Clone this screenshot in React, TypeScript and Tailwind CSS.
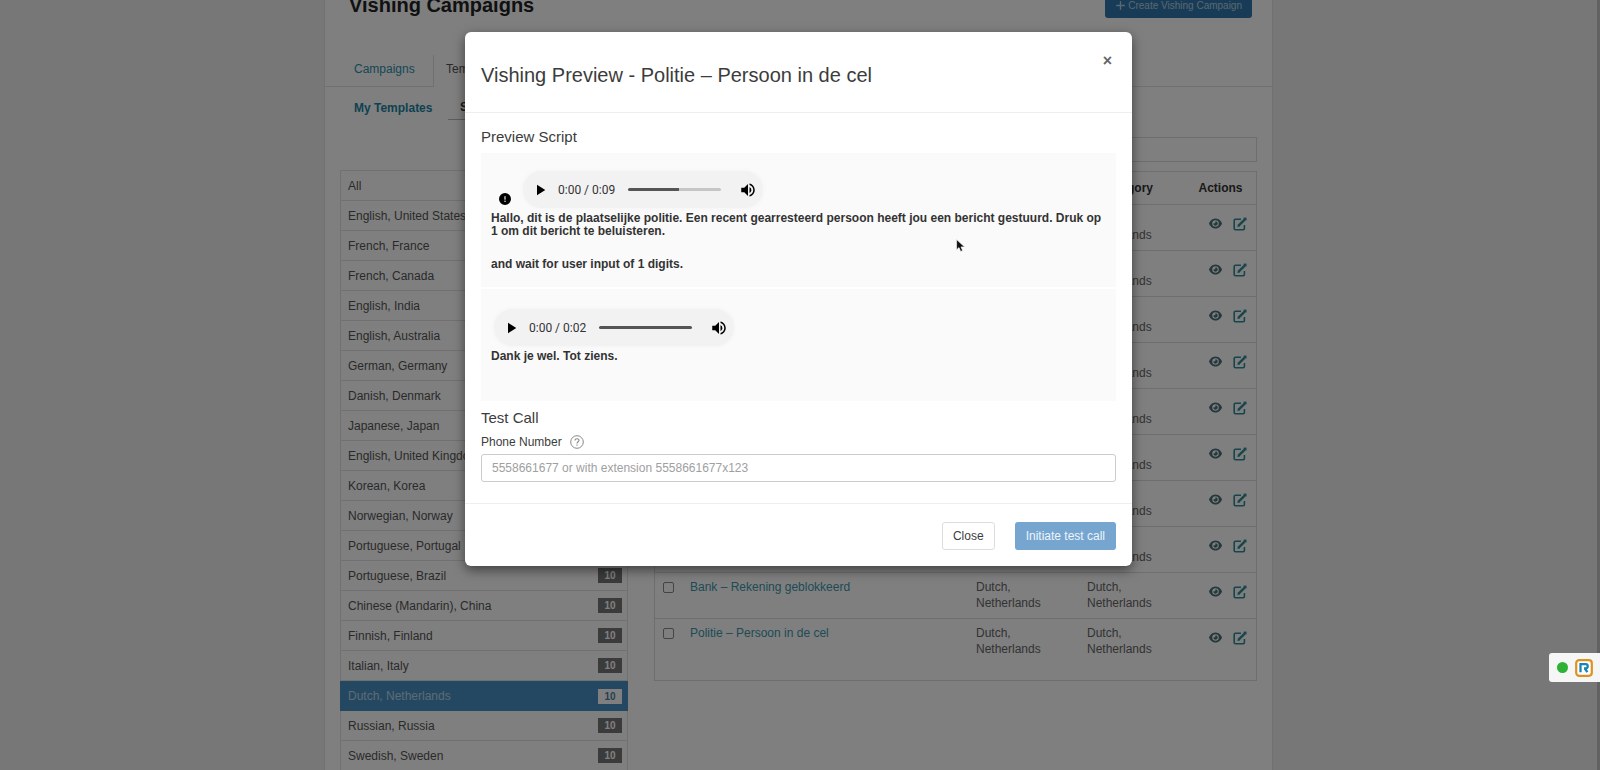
import React from "react";
import { FaCircleExclamation, FaEye, FaPlus } from "react-icons/fa6";
import { MdPlayArrow, MdVolumeUp } from "react-icons/md";

const languages = [
  "All",
  "English, United States",
  "French, France",
  "French, Canada",
  "English, India",
  "English, Australia",
  "German, Germany",
  "Danish, Denmark",
  "Japanese, Japan",
  "English, United Kingdom",
  "Korean, Korea",
  "Norwegian, Norway",
  "Portuguese, Portugal",
  "Portuguese, Brazil",
  "Chinese (Mandarin), China",
  "Finnish, Finland",
  "Italian, Italy",
  "Dutch, Netherlands",
  "Russian, Russia",
  "Swedish, Sweden",
];

const templates = [
  "Bank – Verdachte transactie",
  "Bank – Pincode",
  "Belastingdienst – Teruggave",
  "CEO – Dringend verzoek",
  "Helpdesk – Wachtwoord",
  "HR – Salarisgegevens",
  "IT – Beveiligingsupdate",
  "Pakket – Bezorging",
  "Bank – Rekening geblokkeerd",
  "Politie – Persoon in de cel",
];

function EditIcon() {
  return (
    <svg viewBox="0 0 14 14" className="size-3.5" fill="none" stroke="currentColor">
      <path d="M8 2.2H2.4Q1.2 2.2 1.2 3.4v8.2q0 1.2 1.2 1.2h7.8q1.2 0 1.2-1.2V8" strokeWidth="1.6" />
      <path d="M5.6 8.6L11.4 2.8" strokeWidth="2.4" />
      <path d="M4.4 9.9l.5-2.6 2.1 2.1z" fill="currentColor" stroke="none" />
      <path d="M10.6.6h2.9v2.9h-2.9z" fill="currentColor" stroke="none" />
    </svg>
  );
}

function LanguageList() {
  return (
    <ul className="border-x border-t border-[#e2e2e2] text-xs">
      {languages.map((name) => {
        const active = name === "Dutch, Netherlands";
        return (
          <li key={name}>
            <a
              href="#"
              className={
                active
                  ? "-mx-px flex h-[30px] items-center justify-between bg-[#4a90c4] pr-1.5 pl-2 text-[#bdd6e6]"
                  : "flex h-[30px] items-center justify-between border-b border-[#e2e2e2] pr-[5px] pl-[7px] text-[#555555]"
              }
            >
              {name}
              {name !== "All" && (
                <span
                  className={
                    active
                      ? "w-6 bg-white text-center text-[10px] leading-[15px] font-bold text-[#4a82a8]"
                      : "w-6 bg-[#777777] text-center text-[10px] leading-[15px] font-bold text-white"
                  }
                >
                  10
                </span>
              )}
            </a>
          </li>
        );
      })}
    </ul>
  );
}

function TemplateTable() {
  return (
    <div className="mt-[9px] border border-[#dddddd] pb-4">
      <table className="w-full table-fixed text-xs leading-4 text-[#666666]">
        <thead>
          <tr className="h-8 text-center text-[#333333]">
            <th className="w-[35px]"></th>
            <th>Name</th>
            <th className="w-[111px]">Language</th>
            <th className="w-[98px] pr-[18px]">Category</th>
            <th className="w-[71px]">Actions</th>
          </tr>
        </thead>
        <tbody>
          {templates.map((name) => (
            <tr key={name} className="h-[46px] border-t border-[#dddddd] align-top">
              <td className="pt-[9px] pl-2">
                <input
                  type="checkbox"
                  aria-label={name}
                  className="block size-[11px] appearance-none rounded-[2px] border border-[#888888] bg-white"
                />
              </td>
              <td className="pt-1.5">
                <a href="#" className="text-[#3c96aa]">{name}</a>
              </td>
              <td className="pt-1.5 pr-8">Dutch, Netherlands</td>
              <td className="pt-1.5 pr-6">Dutch, Netherlands</td>
              <td className="pt-3">
                <div className="flex items-center justify-end gap-[11px] pr-[9px]">
                  <button type="button" aria-label="Preview" className="text-[#4a7078]">
                    <FaEye className="size-[13px]" />
                  </button>
                  <button type="button" aria-label="Edit" className="text-[#2f8a96]">
                    <EditIcon />
                  </button>
                </div>
              </td>
            </tr>
          ))}
        </tbody>
      </table>
    </div>
  );
}

function AudioPlayer({ duration, buffered }: { duration: string; buffered: "half" | "full" }) {
  return (
    <div className="flex h-[37px] w-[240px] items-center rounded-full bg-[#f2f2f3] pl-2 shadow-[0_0_4px_#f2f2f3]">
      <button type="button" aria-label="Play" className="mr-[9px] text-black">
        <MdPlayArrow className="size-[18px]" />
      </button>
      <span className="w-[70px] font-[Roboto,sans-serif] text-xs font-normal text-[#333333]">0:00 / {duration}</span>
      <input
        type="range"
        aria-label="Seek"
        defaultValue={0}
        className={
          buffered === "half"
            ? "h-[3px] w-[93px] appearance-none rounded-full bg-linear-to-r from-[#555555] from-55% to-[#c6c6c6] to-55% [&::-webkit-slider-thumb]:size-0 [&::-webkit-slider-thumb]:appearance-none"
            : "h-[3px] w-[93px] appearance-none rounded-full bg-[#555555] [&::-webkit-slider-thumb]:size-0 [&::-webkit-slider-thumb]:appearance-none"
        }
      />
      <button type="button" aria-label="Mute" className="ml-[18px] text-black">
        <MdVolumeUp className="size-[18px]" />
      </button>
    </div>
  );
}

function PreviewDialog() {
  return (
    <div
      role="dialog"
      aria-label="Vishing Preview"
      className="w-full max-w-[667px] rounded-md bg-white text-[#3c3c3c] shadow-[0_4px_12px_rgba(0,0,0,0.5)]"
    >
      <header className="flex h-[81px] items-center justify-between border-b border-[#eeeeee] px-4 pt-1.5">
        <h2 className="text-xl">Vishing Preview - Politie – Persoon in de cel</h2>
        <button type="button" aria-label="Close" className="mr-1 mb-7 text-base leading-4 font-bold text-[#666666]">
          ×
        </button>
      </header>
      <div className="px-4 pt-3.5 pb-[21px]">
        <h3 className="text-[15px] leading-5">Preview Script</h3>
        <div className="mt-1.5 bg-[#fafafa] text-xs leading-[13px] font-bold text-[#333333]">
          <section className="border-b-2 border-white px-2.5 pt-[18px] pb-4">
            <div className="flex items-end gap-3">
              <FaCircleExclamation className="mb-[3px] ml-2 size-3 text-black" />
              <AudioPlayer duration="0:09" buffered="half" />
            </div>
            <p className="mt-1">
              Hallo, dit is de plaatselijke politie. Een recent gearresteerd persoon heeft jou een bericht gestuurd.
              Druk op 1 om dit bericht te beluisteren.
            </p>
            <p className="mt-5">and wait for user input of 1 digits.</p>
          </section>
          <section className="px-2.5 pt-5 pb-[38px]">
            <div className="pl-[3px]">
              <AudioPlayer duration="0:02" buffered="full" />
            </div>
            <p className="mt-1">Dank je wel. Tot ziens.</p>
          </section>
        </div>
        <h3 className="mt-[7px] text-[15px] leading-5">Test Call</h3>
        <div className="mt-1.5 flex items-center gap-2 text-xs leading-4">
          <label htmlFor="phone">Phone Number</label>
          <svg viewBox="0 0 14 14" className="size-3.5 text-[#888888]" fill="none" stroke="currentColor">
            <circle cx="7" cy="7" r="6.3" />
            <path d="M5 5.6C5 3 9.1 3.1 9 5.5 8.9 6.8 7 6.7 7 8.4M7 9.5v1.3" strokeWidth="1.1" />
          </svg>
        </div>
        <input
          id="phone"
          type="text"
          placeholder="5558661677 or with extension 5558661677x123"
          className="mt-1 block h-7 w-full rounded-[3px] border border-[#cccccc] bg-white px-2.5 text-xs placeholder:text-[#a0a0a0]"
        />
      </div>
      <footer className="flex justify-end gap-5 border-t border-[#eeeeee] px-4 pt-[18px] pb-4 text-xs">
        <button type="button" className="h-7 rounded-[3px] border border-[#dddddd] px-2.5">
          Close
        </button>
        <button type="button" className="h-7 rounded-[3px] bg-[#76a6cf] px-[11px] text-[#edf4fa]">
          Initiate test call
        </button>
      </footer>
    </div>
  );
}

export default function App() {
  return (
    <div className="relative h-screen overflow-hidden bg-[#eeeeee] font-['Liberation_Sans',Arial,sans-serif]">
      <div className="border-r-[3px] border-[#c4c4c4]">
        <main className="mx-auto -mt-2 w-full max-w-[949px] border-x border-[#e2e2e2] bg-white">
          <div className="flex h-[26px] items-center justify-between pr-5 pl-6">
            <h1 className="text-xl font-bold text-[#222222]">Vishing Campaigns</h1>
            <button
              type="button"
              className="flex h-[26px] items-center gap-0.5 rounded-[3px] bg-[#3079ae] px-2.5 text-[10px] text-[#b5cfdf]"
            >
              <FaPlus className="size-[11px]" />
              Create Vishing Campaign
            </button>
          </div>
          <nav className="mt-[37px] flex h-8 border-b border-[#e2e2e2] pl-[5px] text-xs">
            <a href="#" className="flex w-[103px] items-center pb-1 pl-6 text-[#2a8fae]">Campaigns</a>
            <a href="#" className="-mb-px flex items-center border-x border-[#e2e2e2] bg-white px-3 pb-1 text-[#555555]">
              Templates
            </a>
          </nav>
          <nav className="flex h-[33px] pl-[29px] text-xs font-bold">
            <a href="#" className="flex w-[94px] items-center pt-2 text-[#1a84a4]">My Templates</a>
            <a href="#" className="flex items-center border-b border-[#bbbbbb] px-3 pt-2 text-[#333333]">
              System Templates
            </a>
          </nav>
          <div className="flex gap-[26px] px-[15px] pt-[17px]">
            <aside className="w-72 shrink-0 pt-[33px]">
              <LanguageList />
            </aside>
            <div className="flex-1">
              <input
                type="search"
                aria-label="Search templates"
                className="block h-[25px] w-full border border-[#dddddd] bg-white px-2 text-xs"
              />
              <TemplateTable />
            </div>
          </div>
        </main>
      </div>

      <div className="absolute inset-0 flex items-start justify-center bg-black/50 pt-8 pr-[3px]">
        <PreviewDialog />
      </div>

      <svg viewBox="0 0 10 14" className="absolute top-[239px] left-[956px] h-3.5 w-2.5">
        <path d="M.6.6v10.2l2.4-2.2 1.7 3.9 1.9-.9L5 7.9h3.6z" fill="#111" stroke="#fff" strokeWidth=".6" />
      </svg>

      <div className="absolute top-[653px] right-0 flex h-[29px] w-[51px] items-center gap-[7px] rounded-l-[3px] bg-[#f6f6f6] pl-2">
        <span className="size-[11px] rounded-full bg-[#2fb135]" />
        <svg viewBox="0 0 18 18" className="size-[18px]">
          <rect x="1.2" y="1.2" width="15.6" height="15.6" rx="3" fill="#fff" stroke="#dd9220" strokeWidth="2.2" />
          <path d="M5.5 13.2V5.2h5.2q2 0 2 2.1 0 1.9-2 2.2H9M9.8 9.5l2.6 3.7" fill="none" stroke="#1685b5" strokeWidth="2.3" />
        </svg>
      </div>
    </div>
  );
}
